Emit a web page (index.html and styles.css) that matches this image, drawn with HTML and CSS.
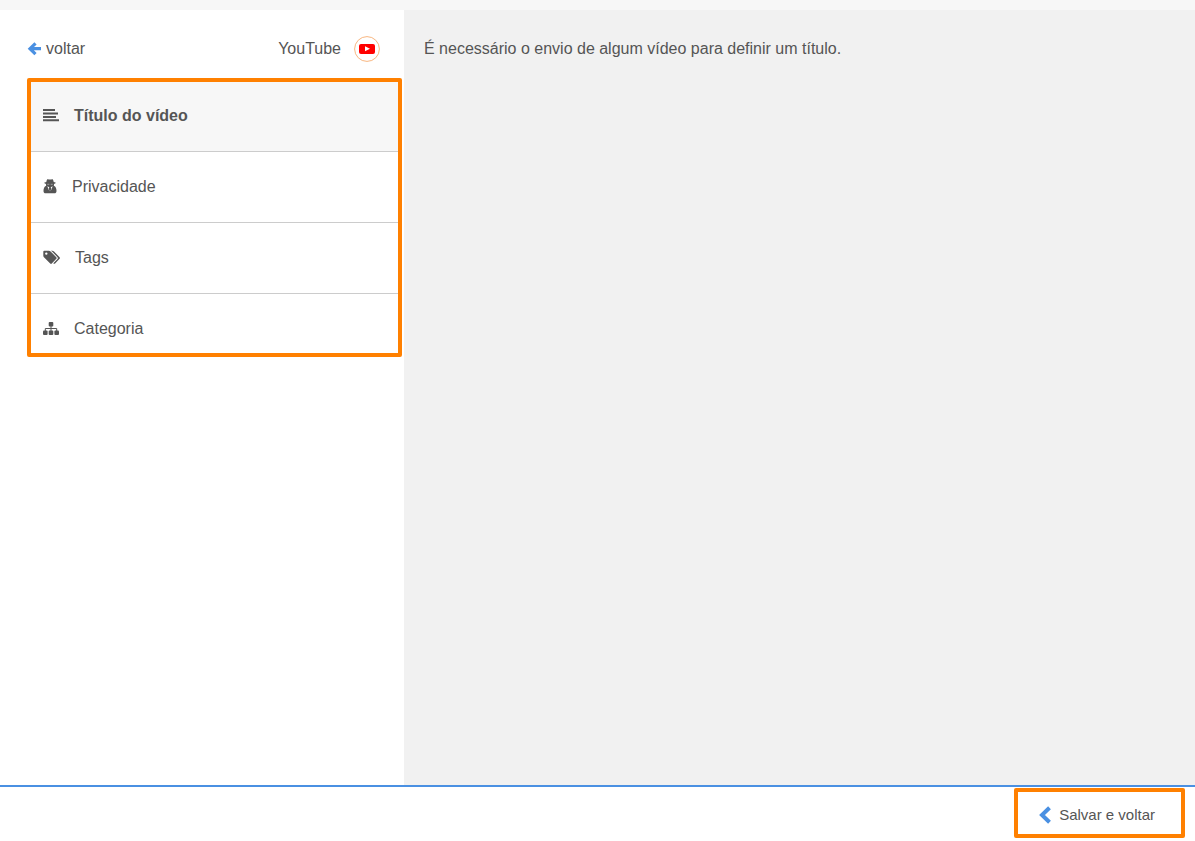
FILE: index.html
```html
<!DOCTYPE html>
<html lang="pt-BR">
<head>
<meta charset="utf-8">
<title>Título do vídeo</title>
<link rel="stylesheet" href="styles.css">
</head>
<body>
<div class="page">
  <main class="content">
    <aside class="sidebar">
      <div class="sidebar-head">
        <a class="back" href="#">
          <svg class="arrow" viewBox="0 0 14 14" aria-hidden="true"><path d="M8.500 1.300 3 6.700l5.500 5.400M3.500 6.700H14" fill="none" stroke="#4a90e2" stroke-width="3.200"/></svg>
          <span>voltar</span>
        </a>
        <div class="channel">
          <span>YouTube</span>
          <svg class="youtube" viewBox="0 0 26 26" aria-hidden="true">
            <circle cx="13" cy="13" r="12.400" fill="#fff" stroke="#f8b680" stroke-width="1"/>
            <rect x="5" y="8" width="16" height="10" rx="2" fill="#f00"/>
            <path d="M11 10.200v5l5-2.500z" fill="#fff"/>
          </svg>
        </div>
      </div>
      <nav class="menu">
        <a class="item active" href="#">
          <svg class="icon" viewBox="0 0 16 16" aria-hidden="true"><path d="M0 1h12v2H0zM0 4.500h15v2H0zM0 8h13v2H0zM0 11.300h16v2H0z" fill="#555"/></svg>
          <span>Título do vídeo</span>
        </a>
        <a class="item" href="#">
          <svg class="icon icon-narrow" viewBox="0 0 14 16" aria-hidden="true">
            <path d="M4.300.300C5.300-.100 6 .600 7 .600S8.700-.100 9.700.300c.600.600.800 1.600 1 2.700 1.200.200 1.900.500 1.900.900 0 .500-.700.800-1.700 1 .200.700.100 1.300-.1 1.800 2 .600 2.700 2.800 2.700 5.200 0 1.700-.8 2.300-2.200 2.300H2.700C1.300 14.200.500 13.600.500 11.900c0-2.400.7-4.600 2.700-5.200-.2-.5-.3-1.100-.1-1.800-1-.2-1.700-.5-1.700-1 0-.4.700-.7 1.900-.9.200-1.100.400-2.100 1-2.700z" fill="#555"/>
            <path d="M4.300 7.300l2 .900-.5 1 .7 3.300zM9.700 7.300l-2 .9.500 1-.7 3.300z" fill="#fff"/>
            <path d="M4.300 5.300h2M7.700 5.300h2" stroke="#ccc" stroke-width=".600"/>
          </svg>
          <span>Privacidade</span>
        </a>
        <a class="item" href="#">
          <svg class="icon icon-wide" viewBox="0 0 17 16" aria-hidden="true">
            <path fill-rule="evenodd" d="M1.200.800h4.700c.7 0 1.200.3 1.700.7l5.700 5.700c.5.500.5 1.100 0 1.600l-4.500 4.700c-.5.500-1.100.5-1.600 0L1.200 7.600C.7 7.100.3 6.400.3 5.700V1.800c0-.6.3-1 .9-1zM3.300 2.400a1.200 1.200 0 1 0 0 2.400 1.200 1.200 0 0 0 0-2.400z" fill="#555"/>
            <path d="M7.800.8h1.400c.7 0 1.300.3 1.800.7l5.600 5.700c.5.500.5 1.100 0 1.600l-4.500 4.700c-.6.600-1.200.4-1.800-.2l4.200-4.400c.5-.5.5-1.100 0-1.700L9 1.500z" fill="#555"/>
          </svg>
          <span>Tags</span>
        </a>
        <a class="item" href="#">
          <svg class="icon" viewBox="0 0 16 16" aria-hidden="true">
            <g fill="#555"><rect x="5.700" y="1" width="4.600" height="4.500" rx="1"/><rect x="0" y="9.500" width="4.600" height="4.500" rx="1"/><rect x="5.700" y="9.500" width="4.600" height="4.500" rx="1"/><rect x="11.400" y="9.500" width="4.600" height="4.500" rx="1"/></g>
            <path d="M8 5v5M2.300 10V7.500h11.400V10" fill="none" stroke="#555"/>
          </svg>
          <span>Categoria</span>
        </a>
      </nav>
    </aside>
    <section class="panel">
      <p class="message">É necessário o envio de algum vídeo para definir um título.</p>
    </section>
  </main>
  <footer class="footer">
    <button class="save" type="button">
      <svg class="chevron" viewBox="0 0 12 18" aria-hidden="true"><path d="M10.500 1.700 3 9l7.500 7.300" fill="none" stroke="#4a90e2" stroke-width="4"/></svg>
      <span>Salvar e voltar</span>
    </button>
  </footer>
</div>
</body>
</html>
```
FILE: styles.css
```css
* {
  box-sizing: border-box;
}

body {
  margin: 0;
  color: #555;
  font: 16px/20px "Liberation Sans", Arial, sans-serif;
}

a {
  color: inherit;
  text-decoration: none;
}

svg {
  display: block;
  flex: none;
}

.page {
  display: flex;
  flex-direction: column;
  min-height: 100vh;
  border-top: 10px solid #f7f7f7;
}

.content {
  display: flex;
  flex: 1;
}

.sidebar {
  flex: none;
  width: 404px;
  padding: 26px 2px 0 27px;
  background: #fff;
}

.sidebar-head {
  display: flex;
  align-items: center;
  justify-content: space-between;
  height: 26px;
  margin-bottom: 16px;
  padding-right: 22px;
}

.back {
  display: flex;
  align-items: center;
  gap: 5px;
}

.arrow {
  width: 14px;
  height: 14px;
}

.channel {
  display: flex;
  align-items: center;
  gap: 13px;
}

.youtube {
  width: 26px;
  height: 26px;
}

.menu {
  border: 4px solid #ff8000;
  border-radius: 2px;
}

.item {
  display: flex;
  align-items: center;
  gap: 15px;
  padding: 25px 12px;
  border-bottom: 1px solid #ccc;
}

.item:first-child {
  padding-top: 24px;
}

.item:last-child {
  padding-bottom: 14px;
  border-bottom: 0;
}

.active {
  background: #f7f7f7;
  font-weight: bold;
}

.icon {
  width: 16px;
  height: 16px;
}

.icon-narrow {
  width: 14px;
}

.icon-wide {
  width: 17px;
}

.panel {
  flex: 1;
  padding: 29px 20px;
  background: #f1f1f1;
}

.message {
  margin: 0;
}

.footer {
  display: flex;
  justify-content: flex-end;
  padding: 1px 10px 3px;
  border-top: 2px solid #4a90e2;
  background: #fff;
}

.save {
  display: flex;
  align-items: center;
  gap: 8px;
  padding: 13px 26px 9px 21px;
  border: 4px solid #ff8000;
  border-radius: 2px;
  background: #fff;
  color: #555;
  font: 15px/20px "Liberation Sans", Arial, sans-serif;
}

.chevron {
  width: 12px;
  height: 18px;
}
```
